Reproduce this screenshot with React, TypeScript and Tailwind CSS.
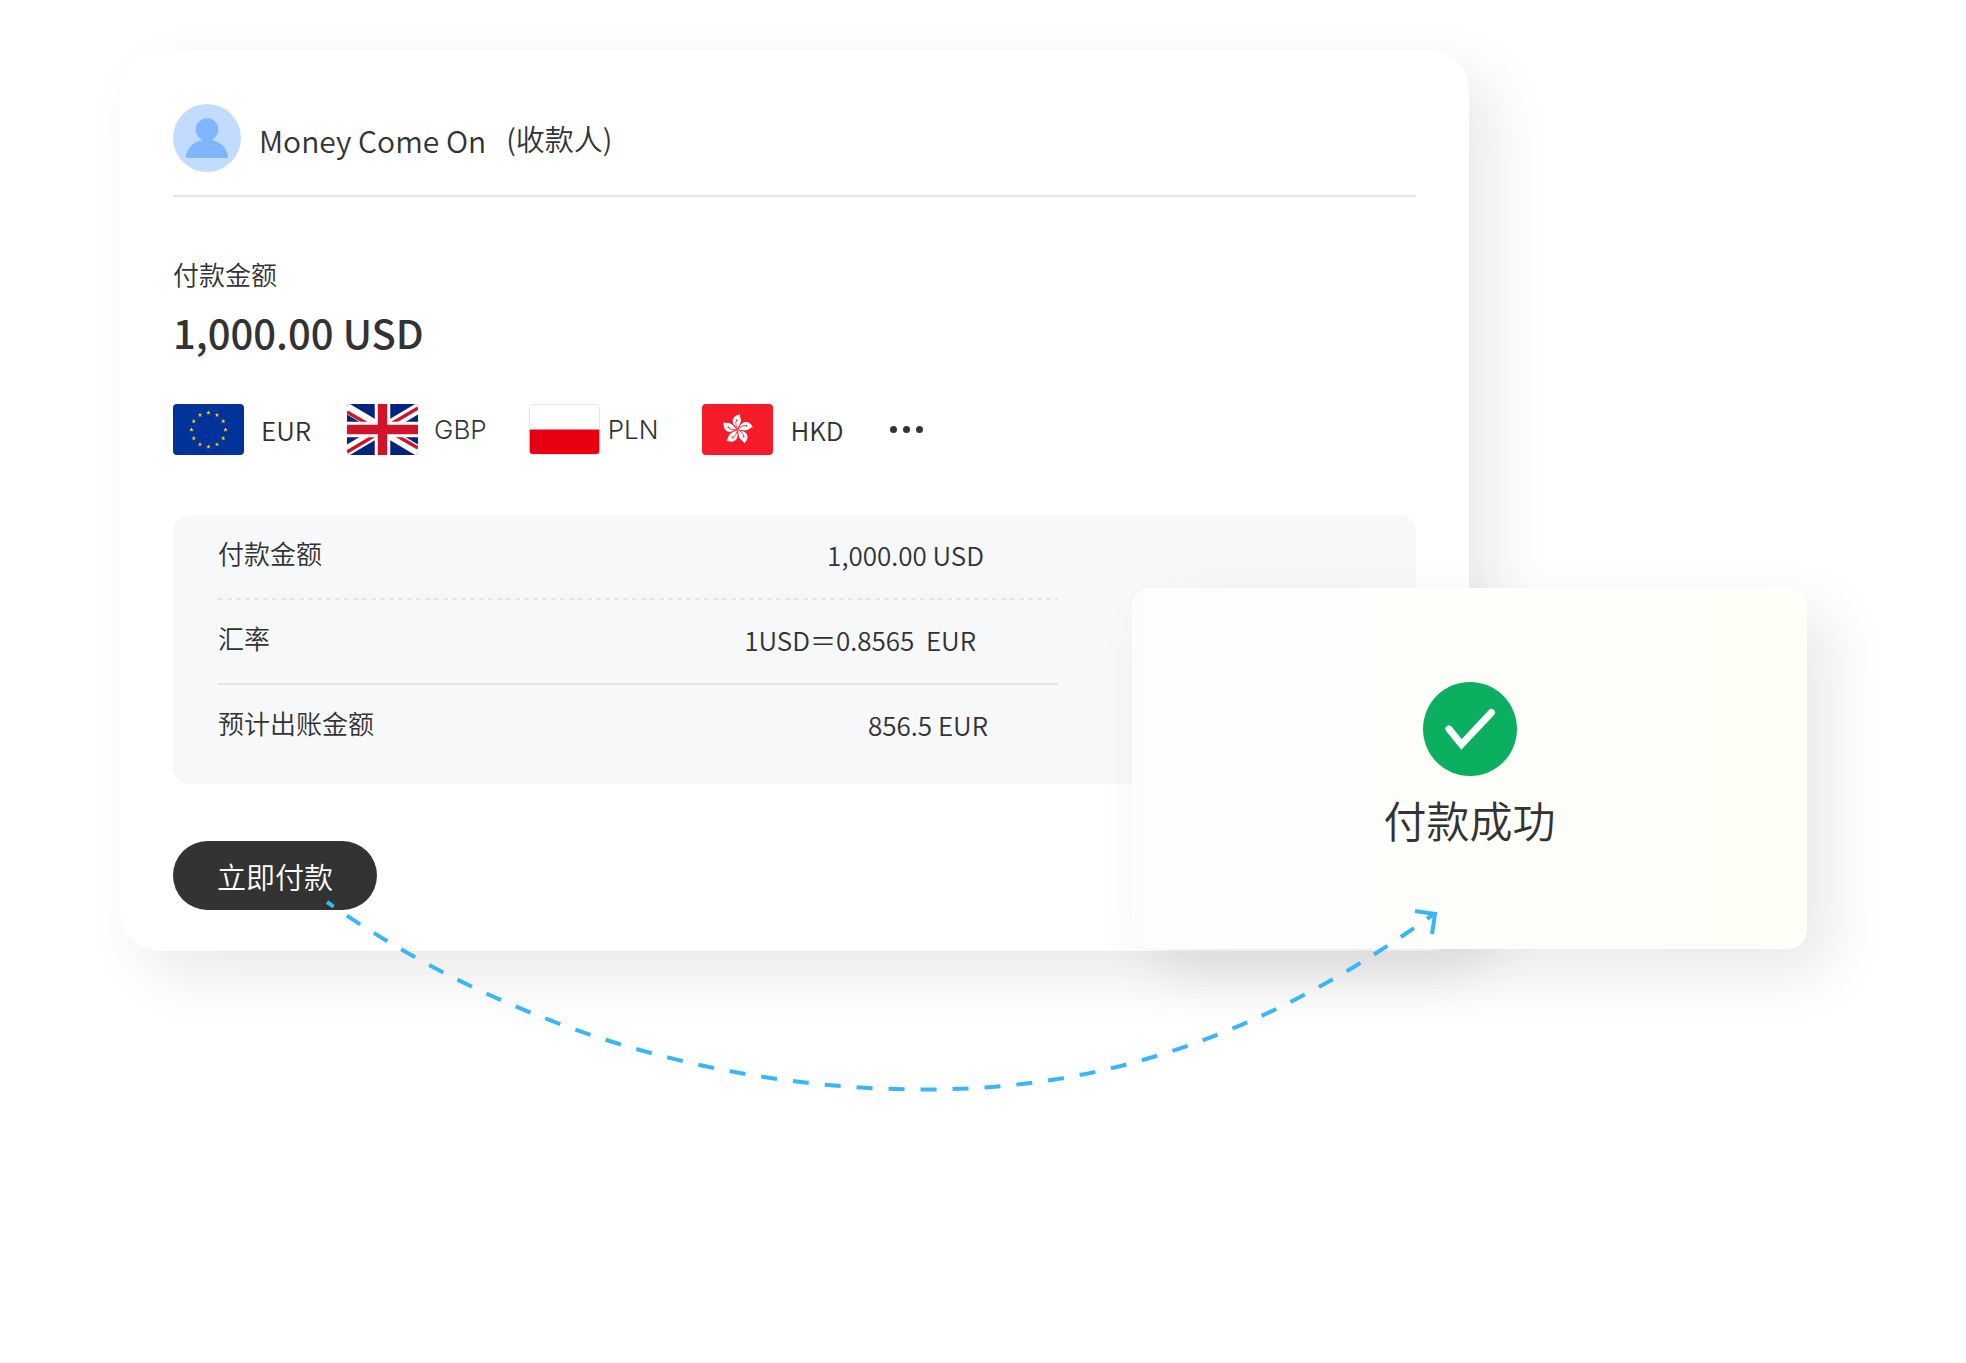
import type { ReactNode } from 'react'

interface Currency {
  code: string
  flag: ReactNode
  className: string
}

interface SummaryRow {
  label: string
  value: string
  className: string
}

const STAR = 'M0-2.4 .6-.75 2.3-.75 .95 .3 1.45 1.95 0 .95-1.45 1.95-.95 .3-2.3-.75-.6-.75Z'

function FlagEu() {
  return (
    <svg viewBox="0 0 71 51" className="h-[51px] w-[71px] rounded" aria-hidden="true">
      <rect width="71" height="51" fill="#039" />
      {Array.from({ length: 12 }, (_, i) => {
        const angle = (i * Math.PI) / 6
        const x = 35.5 + 17 * Math.sin(angle)
        const y = 25.7 - 17 * Math.cos(angle)
        return <path key={i} d={STAR} fill="#fc0" transform={`translate(${x} ${y})`} />
      })}
    </svg>
  )
}

function FlagUk() {
  return (
    <svg viewBox="0 0 71 51" className="h-[51px] w-[71px] rounded" aria-hidden="true">
      <rect width="71" height="51" fill="#00247d" />
      <path d="M-4 2 75 49M75 2-4 49" stroke="#fff" strokeWidth="10.5" />
      <path
        d="M0 8 26 23M71 4 44 20M0 48 27 32M71 44 45 29"
        stroke="#cf142b"
        strokeWidth="3.5"
      />
      <path d="M35.5 0V51M0 25.5H71" stroke="#fff" strokeWidth="15.5" />
      <path d="M35.5 0V51M0 25.5H71" stroke="#cf142b" strokeWidth="9.5" />
    </svg>
  )
}

function FlagPl() {
  return (
    <svg viewBox="0 0 71 51" className="h-[51px] w-[71px] rounded" aria-hidden="true">
      <rect x=".5" y=".5" width="70" height="50" rx="3.5" fill="#fff" stroke="#e6e6e6" />
      <path d="M.7 25.5H70.3V47a3 3 0 0 1-3 3H3.7a3 3 0 0 1-3-3Z" fill="#e60012" />
    </svg>
  )
}

function FlagHk() {
  return (
    <svg viewBox="0 0 71 51" className="h-[51px] w-[71px] rounded" aria-hidden="true">
      <rect width="71" height="51" fill="#f51b29" />
      {[0, 72, 144, 216, 288].map((angle) => (
        <g key={angle} transform={`translate(35.5 25.5) rotate(${angle})`}>
          <path
            d="M0 0C-.6-3-4.8-4-4.8-8.5-4.8-12-2-14.5 2.6-15.3 1.9-13.5 3.4-11.5 3.4-9 3.4-5.5 .8-4 0 0Z"
            fill="#fff"
          />
          <path
            d="M0 0C-1.2-3-2.4-5.6-1.2-8.6"
            fill="none"
            stroke="#f51b29"
            strokeWidth=".8"
          />
          <circle cx="-.8" cy="-9.4" r=".9" fill="#f51b29" />
        </g>
      ))}
    </svg>
  )
}

const currencies: Currency[] = [
  { code: 'EUR', flag: <FlagEu />, className: 'mr-9 gap-[17px]' },
  {
    code: 'GBP',
    flag: <FlagUk />,
    className: "mr-[42px] gap-4 font-['Inter','Noto_Sans_CJK_SC',sans-serif] font-light",
  },
  {
    code: 'PLN',
    flag: <FlagPl />,
    className: "mr-11 gap-2 font-['Inter','Noto_Sans_CJK_SC',sans-serif] font-light",
  },
  { code: 'HKD', flag: <FlagHk />, className: 'mr-[46px] gap-[17px]' },
]

const summary: SummaryRow[] = [
  { label: '付款金额', value: '1,000.00 USD', className: 'pr-[74px]' },
  { label: '汇率', value: '1USD＝0.8565  EUR', className: 'pr-[82px]' },
  { label: '预计出账金额', value: '856.5 EUR', className: 'pr-[70px]' },
]

function Avatar() {
  return (
    <svg viewBox="0 0 68 68" className="size-[68px] shrink-0" aria-hidden="true">
      <circle cx="34" cy="34" r="34" fill="#c2dcff" />
      <circle cx="34" cy="25.5" r="11.2" fill="#80b5ff" />
      <path
        d="M34 35.5c11 0 19 7 21 15.5.6 2.2-.6 3-2 3H15c-1.4 0-2.6-.8-2-3 2-8.5 10-15.5 21-15.5Z"
        fill="#80b5ff"
      />
    </svg>
  )
}

function SuccessCard() {
  return (
    <section className="absolute -right-[338px] bottom-[2px] flex h-[361px] w-[675px] flex-col items-center rounded-[20px] border-2 border-white bg-linear-to-r from-[#fcfcfe] via-[#fefefa] to-[#fffff7] pt-[92px] shadow-[24px_24px_60px_rgba(0,0,0,0.09)]">
      <svg viewBox="0 0 94 94" className="size-[94px]" aria-hidden="true">
        <circle cx="47" cy="47" r="47" fill="#0aaf60" />
        <path
          d="M26 47 38.5 62.5 68.5 30.5"
          fill="none"
          stroke="#fff"
          strokeWidth="7"
          strokeLinecap="round"
        />
      </svg>
      <p className="mt-3 text-[43px] leading-[62px]">付款成功</p>
    </section>
  )
}

function PaymentArrow() {
  return (
    <svg
      viewBox="0 0 1120 200"
      className="pointer-events-none absolute -bottom-[149px] left-[205px] h-[200px] w-[1120px]"
      fill="none"
      stroke="#38b6f9"
      strokeWidth="4"
      aria-hidden="true"
    >
      <path
        d="M2 2C187 131.5 400 189.5 600 189.5C774 189.5 935 139 1109 14"
        strokeDasharray="16 16"
        strokeDashoffset="8"
      />
      <path d="M1090 11 1110 14 1107 34" />
    </svg>
  )
}

export default function App() {
  return (
    <main className="min-h-screen bg-white pt-[50px] pr-[497px] pl-[120px] font-['Noto_Sans_CJK_SC',sans-serif] font-[350] text-[#333]">
      <article className="relative rounded-[40px] bg-white px-[53px] pt-[54px] pb-[41px] shadow-[24px_24px_60px_rgba(0,0,0,0.09)]">
        <header className="flex items-center gap-[18px] border-b-2 border-[#e6e6e6] pb-[23px]">
          <Avatar />
          <h1 className="flex items-center gap-5 text-[30px] leading-[46px]">
            <span className="pt-1">Money Come On</span>
            <span className="text-[29px]">(收款人)</span>
          </h1>
        </header>

        <section className="mt-[57px]">
          <p className="text-[26px] leading-10">付款金额</p>
          <p className="mt-[7px] text-[40px] leading-[62px] font-medium">1,000.00 USD</p>
        </section>

        <div className="mt-[41px] flex items-center">
          {currencies.map((currency) => (
            <div
              key={currency.code}
              className={`flex items-center text-[26px] leading-10 ${currency.className}`}
            >
              {currency.flag}
              <span>{currency.code}</span>
            </div>
          ))}
          <button type="button" aria-label="更多币种" className="flex gap-1.5">
            <span className="size-[7px] rounded-full bg-[#333]" />
            <span className="size-[7px] rounded-full bg-[#333]" />
            <span className="size-[7px] rounded-full bg-[#333]" />
          </button>
        </div>

        <section className="mt-[60px] rounded-2xl bg-[#f7f8fa] pr-[358px] pb-4 pl-[45px]">
          <dl>
            {summary.map((row, index) => (
              <div key={row.label}>
                {index === 1 && (
                  <div className="h-[2px] bg-[repeating-linear-gradient(90deg,#e6e6e6_0_5px,transparent_5px_9px)]" />
                )}
                {index === 2 && <div className="h-[2px] bg-[#e6e6e6]" />}
                <div
                  className={`flex h-[83px] items-start justify-between text-[26px] ${row.className}`}
                >
                  <dt className="leading-[76px]">{row.label}</dt>
                  <dd className="leading-[80px] whitespace-pre">{row.value}</dd>
                </div>
              </div>
            ))}
          </dl>
        </section>

        <button
          type="button"
          className="mt-[57px] block h-[69px] rounded-full bg-[#333] px-11 text-[29px] leading-10 text-white"
        >
          立即付款
        </button>

        <SuccessCard />
        <PaymentArrow />
      </article>
    </main>
  )
}
